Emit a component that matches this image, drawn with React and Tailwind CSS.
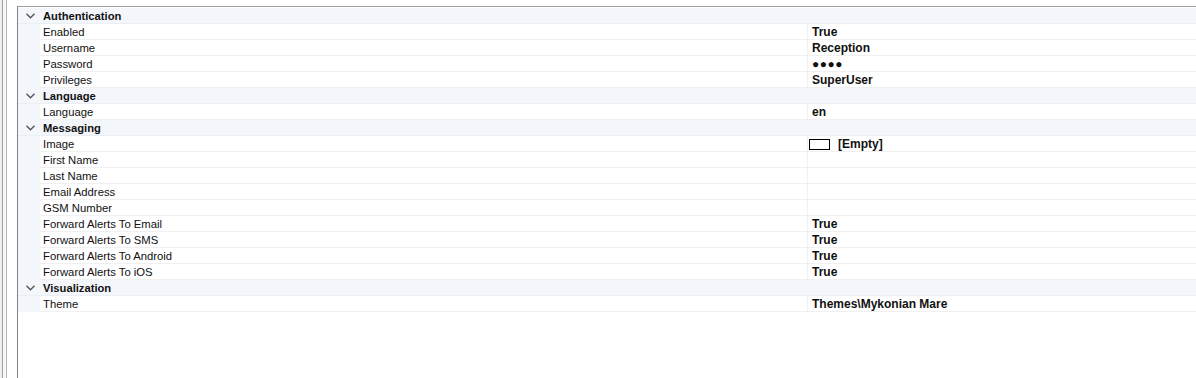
import React from "react";

const sections = [
    {
        title: "Authentication",
        rows: [
            ["Enabled", "True"],
            ["Username", "Reception"],
            ["Password", "password"],
            ["Privileges", "SuperUser"],
        ],
    },
    { title: "Language", rows: [["Language", "en"]] },
    {
        title: "Messaging",
        rows: [
            ["Image", "image"],
            ["First Name", ""],
            ["Last Name", ""],
            ["Email Address", ""],
            ["GSM Number", ""],
            ["Forward Alerts To Email", "True"],
            ["Forward Alerts To SMS", "True"],
            ["Forward Alerts To Android", "True"],
            ["Forward Alerts To iOS", "True"],
        ],
    },
    { title: "Visualization", rows: [["Theme", "Themes\\Mykonian Mare"]] },
];

function Chevron() {
    return (
        <svg width="9" height="6" viewBox="0 0 9 6" className="block">
            <path d="M0.5 0.8 L4.5 4.8 L8.5 0.8" fill="none" stroke="#555" strokeWidth="1.4" />
        </svg>
    );
}

function Value({ value }) {
    if (value === "password") {
        return <span className="text-[12px] tracking-[0.5px]">●●●●</span>;
    }
    if (value === "image") {
        return (
            <span className="flex items-center h-[15px]">
                <span className="inline-block w-[21px] h-[11px] border border-black bg-white ml-[-3px]" />
                <span className="ml-[8px]">[Empty]</span>
            </span>
        );
    }
    return value;
}

export default function App() {
    return (
        <div
            className="flex h-[378px] w-[1196px] bg-white text-[#111]"
            style={{ fontFamily: '"Liberation Sans", Arial, sans-serif' }}
        >
            {/* window chrome on the left */}
            <div className="flex w-[17px] shrink-0">
                <div className="w-[2px] bg-[#f0f0f0]" />
                <div className="w-[1px] bg-[#a0a0a0]" />
                <div className="w-[3px] bg-[#f7f7f7]" />
                <div className="w-[1px] bg-[#b4b4b4]" />
                <div className="flex-1 bg-white" />
            </div>

            <div className="flex-1 flex flex-col pt-[6px]">
                <div className="flex-1 border-t border-l border-[#a0a0a0] border-l-[#828282] pt-[1px]">
                    {sections.map((s) => (
                        <div key={s.title}>
                            <div className="flex h-[16px] bg-[#f3f6fb] border-b border-[#ebeef3]">
                                <div className="w-[22px] flex justify-center items-center pl-[2px] pt-[1px]">
                                    <Chevron />
                                </div>
                                <div className="pl-[3px] pt-[2px] font-bold text-[11.2px] leading-[13px]">
                                    {s.title}
                                </div>
                            </div>
                            {s.rows.map(([label, value]) => (
                                <div key={label} className="flex h-[16px]">
                                    <div className="w-[22px] shrink-0 bg-[#f3f6fb]" />
                                    <div className="flex flex-1 border-b border-[#f0f0f0]">
                                        <div className="w-[768px] shrink-0 pl-[3px] pt-[2px] border-r border-[#f0f0f0] text-[11.3px] leading-[13px]">
                                            {label}
                                        </div>
                                        <div className="flex-1 pl-[4px] pt-[1px] font-bold text-[12px] leading-[14px] flex items-center">
                                            <Value value={value} />
                                        </div>
                                    </div>
                                </div>
                            ))}
                        </div>
                    ))}
                </div>
            </div>
        </div>
    );
}
